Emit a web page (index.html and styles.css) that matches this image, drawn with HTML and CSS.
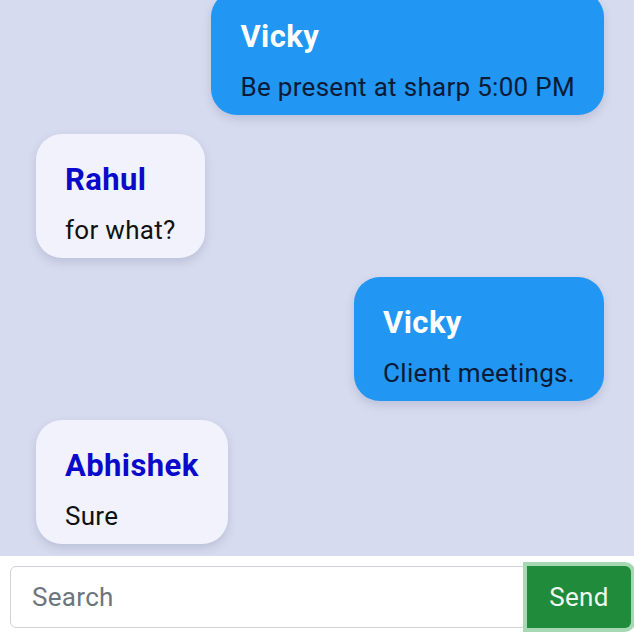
FILE: index.html
```html
<!DOCTYPE html>
<html lang="en">
<head>
<meta charset="utf-8">
<title>Chat</title>
<link rel="stylesheet" href="styles.css">
</head>
<body>
<div class="app">
  <div class="messages">
    <div class="bubble mine">
      <h3 class="name">Vicky</h3>
      <p class="text">Be present at sharp 5:00 PM</p>
    </div>
    <div class="bubble theirs">
      <h3 class="name">Rahul</h3>
      <p class="text">for what?</p>
    </div>
    <div class="bubble mine">
      <h3 class="name">Vicky</h3>
      <p class="text">Client meetings.</p>
    </div>
    <div class="bubble theirs">
      <h3 class="name">Abhishek</h3>
      <p class="text">Sure</p>
    </div>
  </div>
  <form class="composer">
    <input class="field" type="text" placeholder="Search">
    <button class="send" type="button">Send</button>
  </form>
</div>
</body>
</html>
```
FILE: styles.css
```css
* { box-sizing: border-box; }
html, body {
  margin: 0;
  padding: 0;
  height: 100%;
}
body {
  background: #d7dbef;
  font-family: Roboto, "Liberation Sans", sans-serif;
}
.app {
  height: 634px;
  display: flex;
  flex-direction: column;
}
.messages {
  flex: 1;
  min-height: 0;
  overflow: hidden;
  display: flex;
  flex-direction: column;
  justify-content: flex-end;
  gap: 19px;
  padding: 0 30px 12px 36px;
}
.bubble {
  flex-shrink: 0;
  padding: 28px 29px 13px;
  border-radius: 26px;
  box-shadow: 0 4px 10px rgba(60, 70, 120, 0.18);
}
.bubble.mine {
  align-self: flex-end;
  background: #2196f3;
}
.bubble.theirs {
  align-self: flex-start;
  background: #f1f2fb;
}
.name {
  margin: 0 0 18px;
  font-size: 31px;
  font-weight: 700;
  line-height: 36px;
  letter-spacing: 0.4px;
}
.mine .name { color: #ffffff; }
.theirs .name { color: #0a0acb; }
.text {
  margin: 0;
  font-size: 26px;
  line-height: 29px;
  letter-spacing: 0.3px;
  white-space: nowrap;
}
.mine .text { color: #0b1a36; }
.theirs .text { color: #111111; }
.composer {
  flex-shrink: 0;
  background: #ffffff;
  display: flex;
  padding: 10px 3px 6px 10px;
  margin: 0;
}
.field {
  flex: 1;
  min-width: 0;
  height: 62px;
  border: 1px solid #cfd3d8;
  border-radius: 6px 0 0 6px;
  padding: 0 21px;
  font-family: Roboto, "Liberation Sans", sans-serif;
  font-size: 26px;
  letter-spacing: 0.3px;
  color: #212529;
  background: #fff;
  outline: none;
}
.field::placeholder { color: #6c757d; }
.send {
  position: relative;
  z-index: 1;
  width: 104px;
  height: 62px;
  margin-left: -1px;
  border: none;
  border-radius: 0 6px 6px 0;
  background: #208b3b;
  color: #eef8f0;
  font-family: Roboto, "Liberation Sans", sans-serif;
  font-size: 26px;
  letter-spacing: 0.3px;
  box-shadow: 0 0 0 4px #a6d9b3;
  cursor: pointer;
}
```
